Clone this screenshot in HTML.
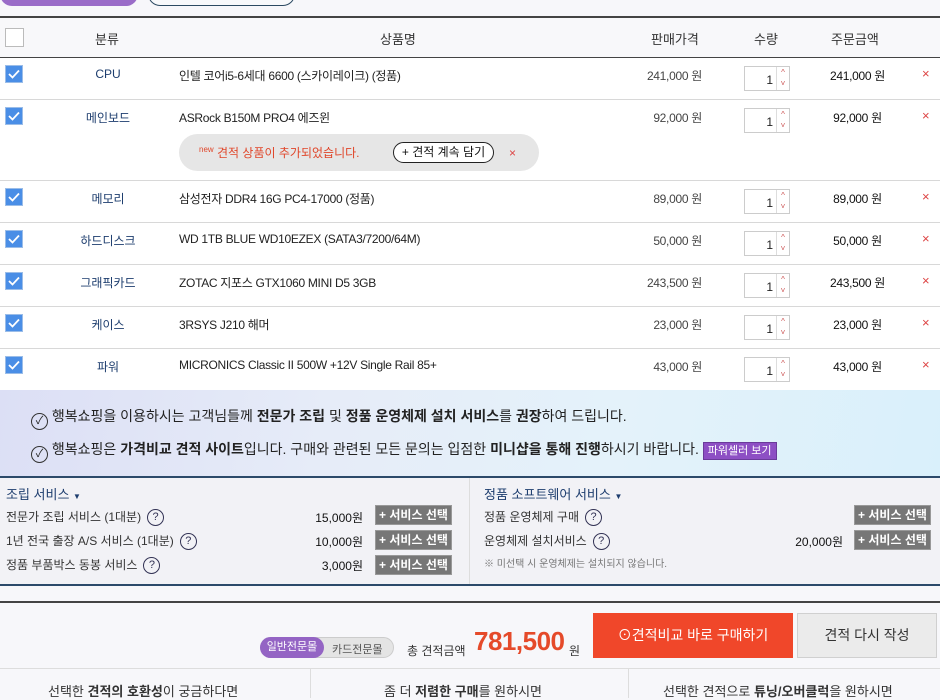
<!DOCTYPE html>
<html><head><meta charset="utf-8"><style>
*{margin:0;padding:0;box-sizing:border-box}
body{width:940px;height:698px;overflow:hidden;background:#f7f7fa;font-family:"Liberation Sans","Noto Sans CJK KR",sans-serif;color:#333;position:relative;font-size:12px}
.a{position:absolute;white-space:nowrap}
.row{position:absolute;left:0;width:940px;background:#fff;border-bottom:1px solid #d8d8d8}
.cb{position:absolute;left:5px;width:18px;height:18px;background:#4a8ee6;border:1px solid #9bbde8}
.cb svg{position:absolute;left:2px;top:2px}
.cat{position:absolute;left:58px;width:100px;text-align:center;color:#1d3d6e;font-size:12px}
.nm{position:absolute;left:179px;font-size:12px;color:#222;letter-spacing:-0.3px}
.pr{position:absolute;right:238px;font-size:12px;color:#444;letter-spacing:-0.3px}
.qty{position:absolute;left:744px;width:46px;height:25px;border:1px solid #ccc;background:#fff}
.qty b{position:absolute;right:16px;top:6px;font-weight:normal;font-size:12px;color:#222}
.qty i{position:absolute;right:0;top:0;width:13px;height:23px;border-left:1px solid #ddd;font-style:normal;color:#c55;font-size:8px;line-height:11px;text-align:center}
.tot{position:absolute;left:800px;width:115px;text-align:center;font-size:12px;color:#111;letter-spacing:-0.3px}
.x{position:absolute;left:922px;color:#d44;font-size:13px}
.q{display:inline-block;width:17px;height:17px;border:1px solid #335;border-radius:50%;text-align:center;font-size:11px;line-height:15px;color:#335;margin-left:6px;vertical-align:middle}
.sb{position:absolute;width:77px;height:20px;background:#777;border:1px solid #999;color:#fff;font-size:12px;text-align:center;line-height:18px;font-weight:bold}
</style></head><body>
<div class="a" style="left:0;top:-10px;width:138px;height:16px;background:#9a6cc8;border-radius:0 0 12px 12px"></div>
<div class="a" style="left:148px;top:-10px;width:147px;height:16px;border:1px solid #2c4a62;border-radius:0 0 12px 12px;background:#f8f9fb"></div>
<div class="a" style="left:0;top:16px;width:940px;height:2px;background:#444"></div>
<div class="a" style="left:0;top:18px;width:940px;height:40px;background:#f8f8fa;border-bottom:1px solid #444"></div>
<div class="a" style="left:5px;top:28px;width:19px;height:19px;background:#fff;border:1px solid #bbb"></div>
<div class="a" style="left:95px;top:29px;font-size:13px">분류</div>
<div class="a" style="left:380px;top:29px;font-size:13px">상품명</div>
<div class="a" style="left:651px;top:29px;font-size:13px">판매가격</div>
<div class="a" style="left:754px;top:29px;font-size:13px">수량</div>
<div class="a" style="left:831px;top:29px;font-size:13px">주문금액</div>

<div class="row" style="top:58px;height:42px"></div>
<div class="row" style="top:100px;height:81px"></div>
<div class="row" style="top:181px;height:42px"></div>
<div class="row" style="top:223px;height:42px"></div>
<div class="row" style="top:265px;height:42px"></div>
<div class="row" style="top:307px;height:42px"></div>
<div class="row" style="top:349px;height:41px;border-bottom:none"></div>

<div style="position:absolute;left:0;top:57px;width:940px">
<div class="cb" style="top:8px"><svg width="12" height="12"><path d="M1 6l3.5 3.5L11 2.5" stroke="#fff" stroke-width="1.8" fill="none"/></svg></div>
<div class="cat" style="top:10px">CPU</div><div class="nm" style="top:10px">인텔 코어i5-6세대 6600 (스카이레이크) (정품)</div>
<div class="pr" style="top:10px">241,000 원</div><div class="qty" style="top:9px"><b>1</b><i>^<br>˅</i></div>
<div class="tot" style="top:10px">241,000 원</div><div class="x" style="top:9px">×</div>
</div>
<div style="position:absolute;left:0;top:99px;width:940px">
<div class="cb" style="top:8px"><svg width="12" height="12"><path d="M1 6l3.5 3.5L11 2.5" stroke="#fff" stroke-width="1.8" fill="none"/></svg></div>
<div class="cat" style="top:10px">메인보드</div><div class="nm" style="top:10px">ASRock B150M PRO4 에즈윈</div>
<div class="pr" style="top:10px">92,000 원</div><div class="qty" style="top:9px"><b>1</b><i>^<br>˅</i></div>
<div class="tot" style="top:10px">92,000 원</div><div class="x" style="top:9px">×</div>
<div class="a" style="left:179px;top:35px;width:360px;height:37px;background:#e6e6e6;border-radius:19px"></div>
<div class="a" style="left:199px;top:45px;color:#e0462a;font-size:12px"><sup style="font-size:8px">new</sup> 견적 상품이 추가되었습니다.</div>
<div class="a" style="left:393px;top:43px;width:101px;height:21px;border:1px solid #222;border-radius:11px;background:#fff;text-align:center;font-size:12px;line-height:19px;color:#111">+ 견적 계속 담기</div>
<div class="a" style="left:509px;top:47px;color:#d44;font-size:12px">×</div>
</div>
<div style="position:absolute;left:0;top:180px;width:940px">
<div class="cb" style="top:8px"><svg width="12" height="12"><path d="M1 6l3.5 3.5L11 2.5" stroke="#fff" stroke-width="1.8" fill="none"/></svg></div>
<div class="cat" style="top:10px">메모리</div><div class="nm" style="top:10px">삼성전자 DDR4 16G PC4-17000 (정품)</div>
<div class="pr" style="top:10px">89,000 원</div><div class="qty" style="top:9px"><b>1</b><i>^<br>˅</i></div>
<div class="tot" style="top:10px">89,000 원</div><div class="x" style="top:9px">×</div>
</div>
<div style="position:absolute;left:0;top:222px;width:940px">
<div class="cb" style="top:8px"><svg width="12" height="12"><path d="M1 6l3.5 3.5L11 2.5" stroke="#fff" stroke-width="1.8" fill="none"/></svg></div>
<div class="cat" style="top:10px">하드디스크</div><div class="nm" style="top:10px">WD 1TB BLUE WD10EZEX (SATA3/7200/64M)</div>
<div class="pr" style="top:10px">50,000 원</div><div class="qty" style="top:9px"><b>1</b><i>^<br>˅</i></div>
<div class="tot" style="top:10px">50,000 원</div><div class="x" style="top:9px">×</div>
</div>
<div style="position:absolute;left:0;top:264px;width:940px">
<div class="cb" style="top:8px"><svg width="12" height="12"><path d="M1 6l3.5 3.5L11 2.5" stroke="#fff" stroke-width="1.8" fill="none"/></svg></div>
<div class="cat" style="top:10px">그래픽카드</div><div class="nm" style="top:10px">ZOTAC 지포스 GTX1060 MINI D5 3GB</div>
<div class="pr" style="top:10px">243,500 원</div><div class="qty" style="top:9px"><b>1</b><i>^<br>˅</i></div>
<div class="tot" style="top:10px">243,500 원</div><div class="x" style="top:9px">×</div>
</div>
<div style="position:absolute;left:0;top:306px;width:940px">
<div class="cb" style="top:8px"><svg width="12" height="12"><path d="M1 6l3.5 3.5L11 2.5" stroke="#fff" stroke-width="1.8" fill="none"/></svg></div>
<div class="cat" style="top:10px">케이스</div><div class="nm" style="top:10px">3RSYS J210 해머</div>
<div class="pr" style="top:10px">23,000 원</div><div class="qty" style="top:9px"><b>1</b><i>^<br>˅</i></div>
<div class="tot" style="top:10px">23,000 원</div><div class="x" style="top:9px">×</div>
</div>
<div style="position:absolute;left:0;top:348px;width:940px">
<div class="cb" style="top:8px"><svg width="12" height="12"><path d="M1 6l3.5 3.5L11 2.5" stroke="#fff" stroke-width="1.8" fill="none"/></svg></div>
<div class="cat" style="top:10px">파워</div><div class="nm" style="top:10px">MICRONICS Classic II 500W +12V Single Rail 85+</div>
<div class="pr" style="top:10px">43,000 원</div><div class="qty" style="top:9px"><b>1</b><i>^<br>˅</i></div>
<div class="tot" style="top:10px">43,000 원</div><div class="x" style="top:9px">×</div>
</div>

<div class="a" style="left:0;top:390px;width:940px;height:86px;background:linear-gradient(100deg,#dcdff5 0%,#e6ecf8 35%,#e4f2fa 65%,#d9f0fb 100%)"></div>
<div class="a" style="left:31px;top:406px;font-size:14px;color:#222"><span style="display:inline-block;width:17px;height:17px;border:1px solid #333;border-radius:50%;vertical-align:-3px;text-align:center;font-size:11px;line-height:15px">✓</span> 행복쇼핑을 이용하시는 고객님들께 <b>전문가 조립</b> 및 <b>정품 운영체제 설치 서비스</b>를 <b>권장</b>하여 드립니다.</div>
<div class="a" style="left:31px;top:439px;font-size:14px;color:#222"><span style="display:inline-block;width:17px;height:17px;border:1px solid #333;border-radius:50%;vertical-align:-3px;text-align:center;font-size:11px;line-height:15px">✓</span> 행복쇼핑은 <b>가격비교 견적 사이트</b>입니다. 구매와 관련된 모든 문의는 입점한 <b>미니샵을 통해 진행</b>하시기 바랍니다. <span style="background:#8d4fc4;color:#fff;font-size:11px;padding:2px 4px;border:1px solid #6a3a9a">파워셀러 보기</span></div>

<div class="a" style="left:0;top:476px;width:940px;height:110px;background:#f2f2f6;border-top:2px solid #2c4a6a;border-bottom:2px solid #2c4a6a"></div>
<div class="a" style="left:469px;top:478px;width:1px;height:106px;background:#ddd"></div>
<div class="a" style="left:6px;top:484px;color:#1d3d6e;font-size:13px">조립 서비스 <span style="font-size:8px">▼</span></div>
<div class="a" style="left:6px;top:508px;font-size:12px">전문가 조립 서비스 (1대분)<span class="q">?</span></div>
<div class="a" style="left:6px;top:532px;font-size:12px">1년 전국 출장 A/S 서비스 (1대분)<span class="q">?</span></div>
<div class="a" style="left:6px;top:556px;font-size:12px">정품 부품박스 동봉 서비스<span class="q">?</span></div>
<div class="a" style="right:577px;top:509px;font-size:12px;color:#111">15,000원</div>
<div class="a" style="right:577px;top:533px;font-size:12px;color:#111">10,000원</div>
<div class="a" style="right:577px;top:557px;font-size:12px;color:#111">3,000원</div>
<div class="sb" style="left:375px;top:505px">+ 서비스 선택</div>
<div class="sb" style="left:375px;top:530px">+ 서비스 선택</div>
<div class="sb" style="left:375px;top:555px">+ 서비스 선택</div>
<div class="a" style="left:484px;top:484px;color:#1d3d6e;font-size:13px">정품 소프트웨어 서비스 <span style="font-size:8px">▼</span></div>
<div class="a" style="left:484px;top:508px;font-size:12px">정품 운영체제 구매<span class="q">?</span></div>
<div class="a" style="left:484px;top:532px;font-size:12px">운영체제 설치서비스<span class="q">?</span></div>
<div class="a" style="left:484px;top:555px;font-size:10px;color:#777">※ 미선택 시 운영체제는 설치되지 않습니다.</div>
<div class="a" style="right:97px;top:533px;font-size:12px;color:#111">20,000원</div>
<div class="sb" style="left:854px;top:505px">+ 서비스 선택</div>
<div class="sb" style="left:854px;top:530px">+ 서비스 선택</div>

<div class="a" style="left:0;top:601px;width:940px;height:2px;background:#444"></div>
<div class="a" style="left:260px;top:637px;width:134px;height:21px;border-radius:11px;background:#e4e4e4;border:1px solid #ccc"></div>
<div class="a" style="left:260px;top:637px;width:64px;height:21px;border-radius:11px;background:#9464c4;color:#fff;font-size:11px;text-align:center;line-height:21px">일반전문몰</div>
<div class="a" style="left:332px;top:641px;font-size:11px;color:#555">카드전문몰</div>
<div class="a" style="left:407px;top:642px;font-size:12px;color:#333">총 견적금액</div>
<div class="a" style="left:474px;top:626px;font-size:26px;font-weight:bold;color:#e54a2a;letter-spacing:-0.5px">781,500</div>
<div class="a" style="left:569px;top:642px;font-size:12px">원</div>
<div class="a" style="left:593px;top:613px;width:200px;height:45px;background:#f0472a;color:#fff;font-size:14px;text-align:center;line-height:45px">⊙견적비교 바로 구매하기</div>
<div class="a" style="left:797px;top:613px;width:140px;height:45px;background:#ebebeb;border:1px solid #d0d0d0;color:#333;font-size:14px;text-align:center;line-height:43px">견적 다시 작성</div>
<div class="a" style="left:0;top:668px;width:940px;height:1px;background:#ddd"></div>
<div class="a" style="left:310px;top:668px;width:1px;height:30px;background:#ddd"></div>
<div class="a" style="left:628px;top:668px;width:1px;height:30px;background:#ddd"></div>
<div class="a" style="left:48px;top:681px;font-size:13px">선택한 <b>견적의 호환성</b>이 궁금하다면</div>
<div class="a" style="left:384px;top:681px;font-size:13px">좀 더 <b>저렴한 구매</b>를 원하시면</div>
<div class="a" style="left:663px;top:681px;font-size:13px">선택한 견적으로 <b>튜닝/오버클럭</b>을 원하시면</div>
</body></html>
